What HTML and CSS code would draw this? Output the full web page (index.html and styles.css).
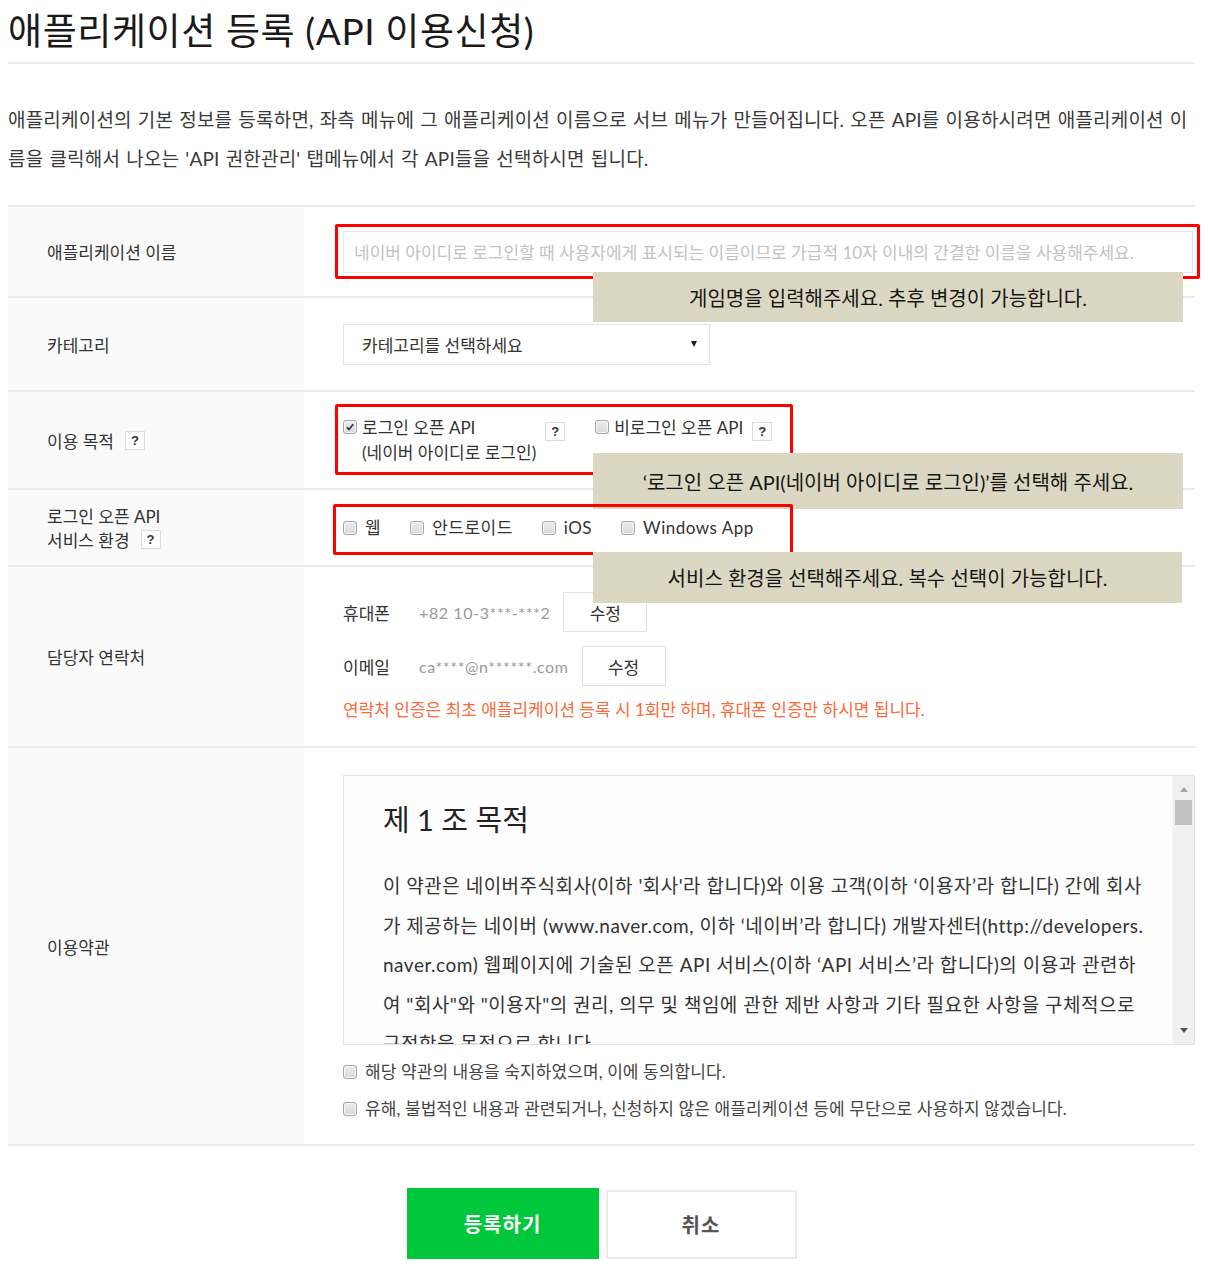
FILE: index.html
```html
<!DOCTYPE html>
<html lang="ko">
<head>
<meta charset="utf-8">
<title>애플리케이션 등록 (API 이용신청)</title>
<link rel="stylesheet" href="styles.css">
</head>
<body>
<div class="page">
  <h1 class="title">애플리케이션 등록 (API 이용신청)</h1>
  <p class="desc">애플리케이션의 기본 정보를 등록하면, 좌측 메뉴에 그 애플리케이션 이름으로 서브 메뉴가 만들어집니다. 오픈 API를 이용하시려면 애플리케이션 이름을 클릭해서 나오는 'API 권한관리' 탭메뉴에서 각 API들을 선택하시면 됩니다.</p>

  <div class="form">
    <div class="row row-name">
      <div class="label">애플리케이션 이름</div>
      <div class="field">
        <div class="input">네이버 아이디로 로그인할 때 사용자에게 표시되는 이름이므로 가급적 10자 이내의 간결한 이름을 사용해주세요.</div>
      </div>
    </div>

    <div class="row row-cat">
      <div class="label">카테고리</div>
      <div class="field">
        <div class="select"><span>카테고리를 선택하세요</span><span class="caret"></span></div>
      </div>
    </div>

    <div class="row row-purpose">
      <div class="label"><span>이용 목적</span><span class="help">?</span></div>
      <div class="field">
        <div class="opts">
          <div class="opt">
            <span class="cb checked"><svg viewBox="0 0 12 12" width="10" height="10"><path d="M2.2 6.3 L4.8 8.9 L9.8 2.6" fill="none" stroke="#333" stroke-width="2"/></svg></span>
            <span class="opt-text">로그인 오픈 API<br>(네이버 아이디로 로그인)</span>
            <span class="help">?</span>
          </div>
          <div class="opt">
            <span class="cb"></span>
            <span class="opt-text">비로그인 오픈 API</span>
            <span class="help">?</span>
          </div>
        </div>
      </div>
    </div>

    <div class="row row-env">
      <div class="label"><span class="label-lines">로그인 오픈 API<br>서비스 환경<span class="help">?</span></span></div>
      <div class="field">
        <div class="envs">
          <label class="env"><span class="cb"></span>웹</label>
          <label class="env"><span class="cb"></span>안드로이드</label>
          <label class="env"><span class="cb"></span>iOS</label>
          <label class="env"><span class="cb"></span>Windows App</label>
        </div>
      </div>
    </div>

    <div class="row row-contact">
      <div class="label">담당자 연락처</div>
      <div class="field">
        <div class="contact">
          <div class="c-line">
            <span class="c-label">휴대폰</span>
            <span class="c-value">+82 10-3***-***2</span>
            <span class="btn-edit">수정</span>
          </div>
          <div class="c-line">
            <span class="c-label">이메일</span>
            <span class="c-value">ca****@n******.com</span>
            <span class="btn-edit">수정</span>
          </div>
          <div class="notice">연락처 인증은 최초 애플리케이션 등록 시 1회만 하며, 휴대폰 인증만 하시면 됩니다.</div>
        </div>
      </div>
    </div>

    <div class="row row-terms">
      <div class="label">이용약관</div>
      <div class="field">
        <div class="terms">
          <div class="terms-body">
            <h2 class="terms-title">제 1 조 목적</h2>
            <p class="terms-text">이 약관은 네이버주식회사(이하 '회사'라 합니다)와 이용 고객(이하 ‘이용자’라 합니다) 간에 회사가 제공하는 네이버 (www.naver.com, 이하 ‘네이버’라 합니다) 개발자센터(http://developers.naver.com) 웹페이지에 기술된 오픈 API 서비스(이하 ‘API 서비스’라 합니다)의 이용과 관련하여 "회사"와 "이용자"의 권리, 의무 및 책임에 관한 제반 사항과 기타 필요한 사항을 구체적으로 규정함을 목적으로 합니다.</p>
          </div>
          <div class="sb">
            <span class="sb-up"></span>
            <span class="sb-thumb"></span>
            <span class="sb-space"></span>
            <span class="sb-down"></span>
          </div>
        </div>
        <div class="agree"><span class="cb"></span>해당 약관의 내용을 숙지하였으며, 이에 동의합니다.</div>
        <div class="agree"><span class="cb"></span>유해, 불법적인 내용과 관련되거나, 신청하지 않은 애플리케이션 등에 무단으로 사용하지 않겠습니다.</div>
      </div>
    </div>

    <div class="mark mark-1"></div>
    <div class="tip tip-1">게임명을 입력해주세요. 추후 변경이 가능합니다.</div>
    <div class="mark mark-2"></div>
    <div class="tip tip-2">‘로그인 오픈 API(네이버 아이디로 로그인)’를 선택해 주세요.</div>
    <div class="mark mark-3"></div>
    <div class="tip tip-3">서비스 환경을 선택해주세요. 복수 선택이 가능합니다.</div>
  </div>

  <div class="actions">
    <span class="btn btn-primary">등록하기</span>
    <span class="btn btn-cancel">취소</span>
  </div>
</div>
</body>
</html>
```

FILE: styles.css
```css
* { box-sizing: border-box; }

body {
  margin: 8px;
  background: #fff;
  color: #333;
  font-family: "Lato", "Noto Sans CJK KR", sans-serif;
}

.page { width: 1187px; }

.title {
  margin: 0;
  padding-bottom: 8px;
  border-bottom: 2px solid #ececec;
  font-size: 37px;
  font-weight: 400;
  line-height: 46px;
  letter-spacing: 0.6px;
  color: #1a1a1a;
}

.desc {
  margin: 36px 0 0;
  font-size: 19px;
  line-height: 39px;
  letter-spacing: 0.2px;
  word-spacing: 1px;
  color: #3a3a3a;
}

.form {
  position: relative;
  margin-top: 27px;
  border-top: 2px solid #ebebed;
}

.row {
  display: grid;
  grid-template-columns: 296px 1fr;
  border-bottom: 2px solid #ebebed;
}

.row-name { min-height: 91px; }
.row-cat { min-height: 94px; }
.row-purpose { min-height: 98px; }
.row-env { min-height: 77px; }
.row-contact { min-height: 181px; }

.label {
  display: flex;
  align-items: center;
  padding-left: 39px;
  background: #fafafa;
  font-size: 17px;
  letter-spacing: 0;
  color: #333;
}

.label-lines {
  display: block;
  padding-top: 2px;
  line-height: 24px;
}

.field {
  display: flex;
  align-items: center;
  padding-left: 39px;
}

.help {
  display: inline-flex;
  align-items: center;
  justify-content: center;
  width: 20px;
  height: 19px;
  margin-left: 11px;
  border: 1px solid #dcdcdc;
  background: #fff;
  font-family: "Liberation Sans", sans-serif;
  font-size: 13px;
  font-weight: 700;
  letter-spacing: 0;
  color: #333;
  vertical-align: -3px;
}

.label-lines .help { vertical-align: 3px; }

/* row 1 */
.input {
  display: flex;
  align-items: center;
  width: 850px;
  height: 42px;
  padding-left: 10px;
  border: 1px solid #e5e5e5;
  font-size: 17px;
  letter-spacing: 0;
  color: #c2c2c2;
  white-space: nowrap;
  overflow: hidden;
}

/* row 2 */
.select {
  display: flex;
  align-items: center;
  justify-content: space-between;
  width: 367px;
  height: 41px;
  padding: 0 12px 0 18px;
  border: 1px solid #e3e3e3;
  background: #fff;
  font-size: 17px;
  letter-spacing: 0;
  color: #333;
}

.caret {
  width: 0;
  height: 0;
  border-left: 3.5px solid transparent;
  border-right: 3.5px solid transparent;
  border-top: 6px solid #1a1a1a;
}

/* checkboxes */
.cb {
  display: inline-flex;
  align-items: center;
  justify-content: center;
  flex: none;
  width: 14px;
  height: 14px;
  border: 1px solid #a4a4a4;
  border-radius: 3px;
  background: linear-gradient(#ececec, #d9d9d9);
  box-shadow: inset 0 0 0 1px #f7f7f7;
}

/* row 3 */
.opts { display: flex; align-items: flex-start; }

.opt {
  display: flex;
  align-items: flex-start;
  font-size: 17px;
  line-height: 25px;
  letter-spacing: 0;
  color: #333;
}

.opt + .opt { margin-left: 30px; }
.opt .cb { margin: 5px 5px 0 0; }
.opt .help { margin: 7px 0 0 9px; }

/* row 4 */
.envs { display: flex; align-items: center; }

.env {
  display: flex;
  align-items: center;
  font-size: 17px;
  line-height: 25px;
  letter-spacing: 0.5px;
  color: #333;
}

.env + .env { margin-left: 29px; }
.env .cb { margin-right: 8px; }

/* row 5 */
.row-contact .field {
  align-items: flex-start;
  padding-top: 25px;
}

.contact { display: flex; flex-direction: column; }

.c-line {
  display: flex;
  align-items: center;
  height: 40px;
}

.c-line + .c-line { margin-top: 14px; }

.c-label {
  width: 76px;
  font-size: 17px;
  letter-spacing: 0;
  color: #333;
}

.c-value {
  font-size: 16px;
  letter-spacing: 0.6px;
  color: #9a9a9a;
}

.btn-edit {
  display: flex;
  align-items: center;
  justify-content: center;
  width: 84px;
  height: 40px;
  margin-left: 13px;
  border: 1px solid #e2e2e2;
  background: #fff;
  font-size: 17px;
  letter-spacing: 0;
  color: #333;
}

.notice {
  margin-top: 13px;
  font-size: 17px;
  line-height: 22px;
  letter-spacing: 0;
  color: #fa6a3a;
}

/* row 6 */
.row-terms .field {
  display: block;
  padding: 27px 0 17px 39px;
}

.terms {
  display: flex;
  height: 270px;
  border: 1px solid #e3e3e3;
  background: #fdfdfd;
}

.terms-body {
  flex: 1;
  overflow: hidden;
  padding: 22px 26px 0 39px;
}

.terms-title {
  margin: 0 0 24px;
  font-size: 29px;
  font-weight: 400;
  line-height: 44px;
  letter-spacing: 0;
  color: #222;
}

.terms-text {
  margin: 0;
  font-size: 19px;
  line-height: 39.6px;
  letter-spacing: 0.5px;
  word-break: break-all;
  color: #333;
}

.sb {
  display: flex;
  flex-direction: column;
  align-items: center;
  width: 22px;
  padding: 11px 0 11px;
  background: #f0f0f0;
  border-left: 1px solid #f7f7f7;
}

.sb-up {
  width: 0;
  height: 0;
  border-left: 4px solid transparent;
  border-right: 4px solid transparent;
  border-bottom: 5px solid #a8a8a8;
}

.sb-thumb {
  width: 17px;
  height: 25px;
  margin-top: 8px;
  background: #c1c1c1;
}

.sb-space { flex: 1; }

.sb-down {
  width: 0;
  height: 0;
  border-left: 4px solid transparent;
  border-right: 4px solid transparent;
  border-top: 5px solid #505050;
}

.agree {
  display: flex;
  align-items: center;
  font-size: 17px;
  line-height: 37px;
  letter-spacing: 0.1px;
  color: #444;
}

.terms + .agree { margin-top: 8px; }
.agree .cb { margin-right: 8px; }

/* annotations */
.mark {
  position: absolute;
  border: 3px solid #ff0000;
  border-radius: 2px;
}

.mark-1 { left: 327px; top: 17px; width: 865px; height: 55px; }
.mark-2 { left: 327px; top: 197px; width: 458px; height: 71px; }
.mark-3 { left: 325px; top: 297px; width: 460px; height: 51px; }

.tip {
  position: absolute;
  display: flex;
  align-items: center;
  justify-content: center;
  background: #dbd7c2;
  font-size: 20px;
  letter-spacing: 0;
  color: #151515;
}

.tip-1 { left: 585px; top: 65px; width: 590px; height: 50px; }
.tip-2 { left: 585px; top: 246px; width: 590px; height: 56px; }
.tip-3 { left: 585px; top: 345px; width: 589px; height: 51px; }

/* actions */
.actions {
  display: flex;
  justify-content: center;
  align-items: flex-end;
  gap: 7px;
  margin-top: 42px;
}

.btn {
  display: flex;
  align-items: center;
  justify-content: center;
  font-size: 20px;
  font-weight: 700;
  letter-spacing: 1px;
}

.btn-primary {
  width: 192px;
  height: 71px;
  background: #00c73c;
  color: #fff;
}

.btn-cancel {
  width: 191px;
  height: 69px;
  border: 2px solid #ebebed;
  background: #fff;
  color: #555;
}
```
